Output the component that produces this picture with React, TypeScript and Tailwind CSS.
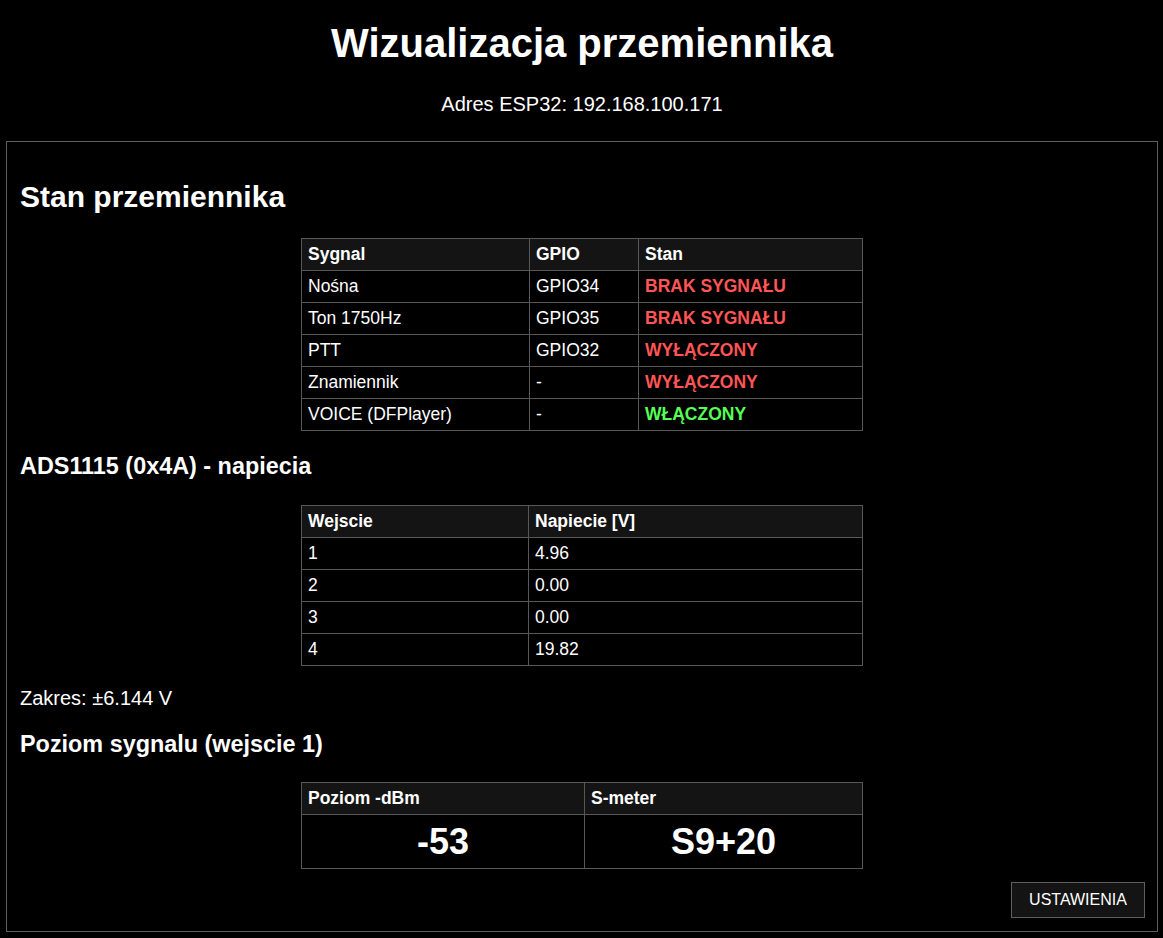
import React from "react";

type Status = { text: string; on: boolean };

const signals: { name: string; gpio: string; status: Status }[] = [
  { name: "Nośna", gpio: "GPIO34", status: { text: "BRAK SYGNAŁU", on: false } },
  { name: "Ton 1750Hz", gpio: "GPIO35", status: { text: "BRAK SYGNAŁU", on: false } },
  { name: "PTT", gpio: "GPIO32", status: { text: "WYŁĄCZONY", on: false } },
  { name: "Znamiennik", gpio: "-", status: { text: "WYŁĄCZONY", on: false } },
  { name: "VOICE (DFPlayer)", gpio: "-", status: { text: "WŁĄCZONY", on: true } },
];

const voltages: { input: string; value: string }[] = [
  { input: "1", value: "4.96" },
  { input: "2", value: "0.00" },
  { input: "3", value: "0.00" },
  { input: "4", value: "19.82" },
];

const cell = "border border-[#575757] px-[6px] py-[6px] leading-[19px] text-left align-middle";
const head = cell + " bg-[#141414] font-bold";
const big = "border border-[#575757] px-[6px] py-[6px] text-center text-[36px] leading-[41px] font-bold";
const table = "mx-auto w-[562px] table-fixed border-collapse text-[17.5px]";

export default function App() {
  return (
    <div className="min-h-screen bg-black text-white font-['Liberation_Sans',Arial,sans-serif] pl-[6px] pr-[5px] pb-[6px]">
      <h1 className="pt-[20px] text-center text-[40px] leading-[46px] font-bold">
        Wizualizacja przemiennika
      </h1>
      <p className="mt-[27px] text-center text-[20px] leading-[23px]">
        Adres ESP32: 192.168.100.171
      </p>

      <section className="mt-[25px] border border-[#5e5e5e] px-[12px] pt-[12px] pb-[13px]">
        <h2 className="mt-[26px] pl-px text-[30px] leading-[34px] font-bold">Stan przemiennika</h2>

        <table className={"mt-[24px] " + table}>
          <colgroup>
            <col className="w-[228px]" />
            <col className="w-[109px]" />
            <col />
          </colgroup>
          <thead>
            <tr>
              <th className={head}>Sygnal</th>
              <th className={head}>GPIO</th>
              <th className={head}>Stan</th>
            </tr>
          </thead>
          <tbody>
            {signals.map((s) => (
              <tr key={s.name}>
                <td className={cell}>{s.name}</td>
                <td className={cell}>{s.gpio}</td>
                <td className={cell + " font-bold " + (s.status.on ? "text-[#55ff55]" : "text-[#ff5555]")}>
                  {s.status.text}
                </td>
              </tr>
            ))}
          </tbody>
        </table>

        <h3 className="mt-[22px] pl-px text-[23.4px] leading-[27px] font-bold">ADS1115 (0x4A) - napiecia</h3>

        <table className={"mt-[25px] " + table}>
          <colgroup>
            <col className="w-[227px]" />
            <col />
          </colgroup>
          <thead>
            <tr>
              <th className={head}>Wejscie</th>
              <th className={head}>Napiecie [V]</th>
            </tr>
          </thead>
          <tbody>
            {voltages.map((v) => (
              <tr key={v.input}>
                <td className={cell}>{v.input}</td>
                <td className={cell}>{v.value}</td>
              </tr>
            ))}
          </tbody>
        </table>

        <p className="mt-[21px] pl-px text-[20px] leading-[23px]">Zakres: ±6.144 V</p>

        <h3 className="mt-[21px] pl-px text-[23.4px] leading-[27px] font-bold">Poziom sygnalu (wejscie 1)</h3>

        <table className={"mt-[24px] " + table}>
          <colgroup>
            <col className="w-[283px]" />
            <col />
          </colgroup>
          <thead>
            <tr>
              <th className={head}>Poziom -dBm</th>
              <th className={head}>S-meter</th>
            </tr>
          </thead>
          <tbody>
            <tr>
              <td className={big}>-53</td>
              <td className={big}>S9+20</td>
            </tr>
          </tbody>
        </table>

        <div className="mt-[13px] flex justify-end">
          <button
            type="button"
            className="h-[36px] w-[134px] border border-[#5e5e5e] bg-[#141414] text-[16px] text-white"
          >
            USTAWIENIA
          </button>
        </div>
      </section>
    </div>
  );
}
